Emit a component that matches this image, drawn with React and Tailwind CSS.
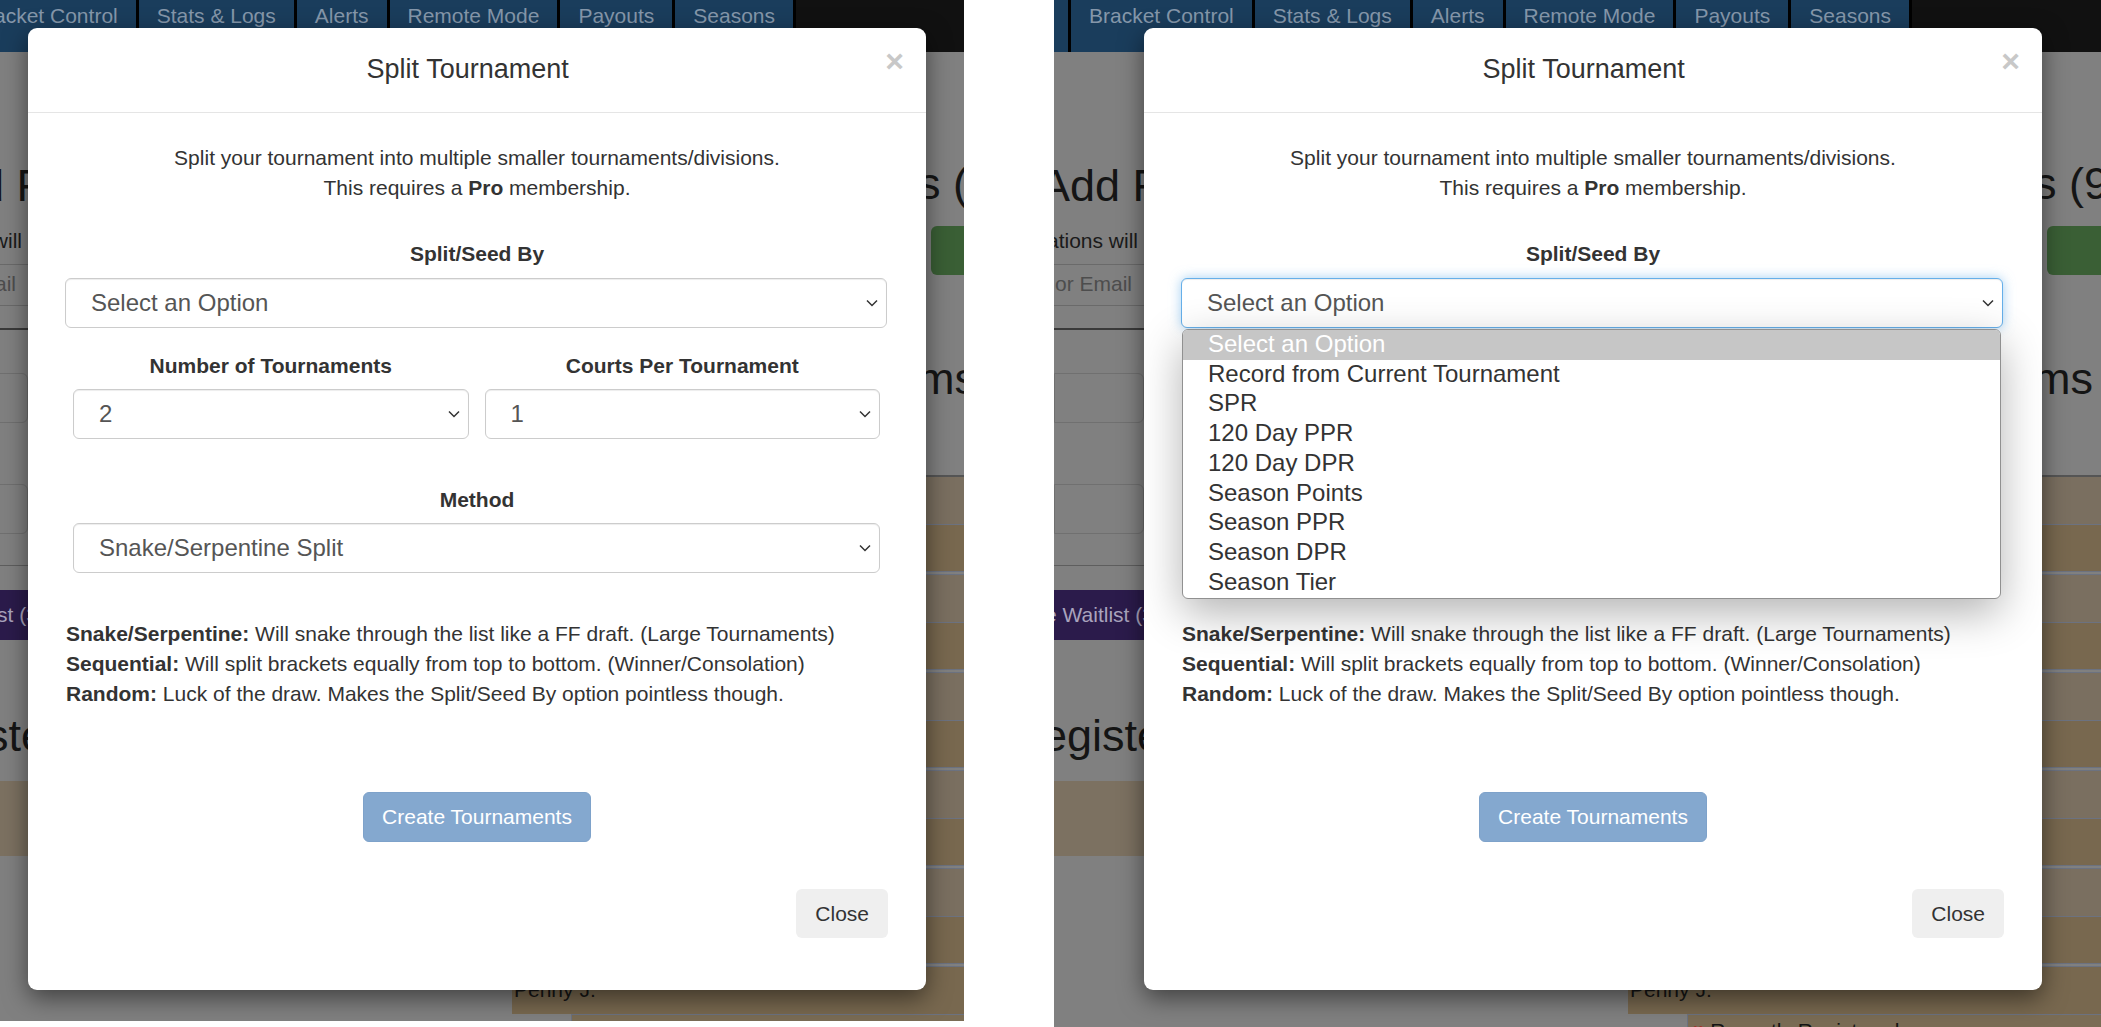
import React from "react";

const TABS = ["Bracket Control", "Stats & Logs", "Alerts", "Remote Mode", "Payouts", "Seasons"];
const OPTIONS = [
  "Select an Option",
  "Record from Current Tournament",
  "SPR",
  "120 Day PPR",
  "120 Day DPR",
  "Season Points",
  "Season PPR",
  "Season DPR",
  "Season Tier",
];

function Chevron() {
  return (
    <svg width="12" height="8" viewBox="0 0 12 8" className="shrink-0">
      <path d="M1 1.5 L6 6.5 L11 1.5" fill="none" stroke="#333" strokeWidth="1.5" />
    </svg>
  );
}

function FakeSelect({ value, focused }) {
  return (
    <div
      className={
        focused
          ? "h-[50px] flex items-center justify-between pl-[25px] pr-[8px] rounded-[6px] border border-[#66afe9] bg-white text-[24px] text-[#555] shadow-[inset_0_1px_1px_rgba(0,0,0,0.075),0_0_12px_rgba(102,175,233,0.6)]"
          : "h-[50px] flex items-center justify-between pl-[25px] pr-[8px] rounded-[6px] border border-[#cccccc] bg-white text-[24px] text-[#555] shadow-[inset_0_1px_1px_rgba(0,0,0,0.075)]"
      }
    >
      <span className="whitespace-nowrap">{value}</span>
      <Chevron />
    </div>
  );
}

function Dropdown() {
  return (
    <div className="absolute z-10 top-[51px] left-[1px] right-[2px] bg-white border border-[#909090] rounded-[6px] overflow-hidden shadow-[0_14px_44px_rgba(0,0,0,0.3)]">
      {OPTIONS.map((o, i) => (
        <div
          key={o}
          className={
            i === 0
              ? "h-[29.75px] pl-[25px] pb-[2px] flex items-center text-[24px] bg-[#c6c6c6] text-white whitespace-nowrap"
              : "h-[29.75px] pl-[25px] pb-[2px] flex items-center text-[24px] text-[#333] whitespace-nowrap"
          }
        >
          {o}
        </div>
      ))}
    </div>
  );
}

function Modal({ open }) {
  return (
    <div className="absolute left-[90px] top-[28px] w-[898px] h-[962px] bg-white rounded-[9px] shadow-[0_8px_24px_rgba(0,0,0,0.5)] text-[#333]">
      <div className="h-[85px] border-b border-[#e5e5e5] flex pt-[22px] px-[22px]">
        <div className="flex-1 text-center text-[27px] leading-[38px] whitespace-nowrap">Split Tournament</div>
        <span className="-mt-[5px] text-[32px] leading-[32px] font-bold text-[#c8c8c8]">×</span>
      </div>

      <div className="pt-[30px] text-center text-[21px] leading-[30px]">
        Split your tournament into multiple smaller tournaments/divisions.
        <br />
        This requires a <b>Pro</b> membership.
      </div>

      <div className="mt-[36px] text-center font-bold text-[21px] leading-[30px]">Split/Seed By</div>
      <div className="relative z-10 mt-[9px] ml-[37px] mr-[39px]">
        <FakeSelect value="Select an Option" focused={open} />
        {open && <Dropdown />}
      </div>

      <div className="mt-[23px] ml-[45px] mr-[46px] grid grid-cols-2 gap-x-[16px]">
        <div className="text-center font-bold text-[21px] leading-[30px]">Number of Tournaments</div>
        <div className="text-center font-bold text-[21px] leading-[30px]">Courts Per Tournament</div>
        <div className="mt-[8px]">
          <FakeSelect value="2" />
        </div>
        <div className="mt-[8px]">
          <FakeSelect value="1" />
        </div>
      </div>

      <div className="mt-[46px] text-center font-bold text-[21px] leading-[30px]">Method</div>
      <div className="mt-[8px] ml-[45px] mr-[46px]">
        <FakeSelect value="Snake/Serpentine Split" />
      </div>

      <div className="mt-[46px] ml-[38px] text-[21px] leading-[30px] whitespace-nowrap">
        <div>
          <b>Snake/Serpentine:</b> Will snake through the list like a FF draft. (Large Tournaments)
        </div>
        <div>
          <b>Sequential:</b> Will split brackets equally from top to bottom. (Winner/Consolation)
        </div>
        <div>
          <b>Random:</b> Luck of the draw. Makes the Split/Seed By option pointless though.
        </div>
      </div>

      <div className="mt-[83px] flex justify-center">
        <div className="w-[228px] h-[50px] rounded-[6px] bg-[#84a8cf] border border-[#7ea2ca] text-white text-[21px] flex items-center justify-center whitespace-nowrap">
          Create Tournaments
        </div>
      </div>

      <div className="mt-[47px] flex justify-end mr-[38px]">
        <div className="h-[49px] px-[19px] rounded-[6px] bg-[#efefef] text-[21px] flex items-center">Close</div>
      </div>
    </div>
  );
}

function TanBlock() {
  return (
    <div className="border-b border-[#6c7280]">
      <div className="h-[48px] bg-[#7a6f60] border-b border-[#6c7280]" />
      <div className="h-[47px] bg-[#78684f] border-b border-[#6c7280] mb-[2px]" />
    </div>
  );
}

function Screen({ open }) {
  return (
    <div className="relative w-[1047px] h-[1027px] bg-[#808080] overflow-hidden">
      <div className="h-[52px] bg-[#111] flex">
        <div className="w-[17px] h-full bg-[#1a3d5c] border-r-[3px] border-black" />
        {TABS.map((t) => (
          <div
            key={t}
            className="h-full bg-[#1a3d5c] border-r-[3px] border-black px-[18px] pt-[1px] text-[21px] leading-[30px] text-[#8597aa] whitespace-nowrap"
          >
            {t}
          </div>
        ))}
      </div>

      <div className="flex">
        <div className="w-[574px] shrink-0">
          <div className="mt-[109px] -ml-[14px] text-[45px] leading-[50px] text-[#151515] whitespace-nowrap">Add Free Agents</div>
          <div className="mt-[15px] -ml-[7px] text-[21px] leading-[30px] text-[#1a1a1a] whitespace-nowrap">ations will receive an email</div>
          <div className="mt-[8px] h-[42px] border-y border-[#6a6a6a] pt-[4px] pl-[1px] text-[21px] leading-[30px] text-[#4d4d4d]">or Email</div>
          <div className="mt-[22px] h-[2px] bg-[#3a3a3a]" />
          <div className="mt-[43px] w-[90px] h-[50px] rounded-r-[6px] border border-[#707070]" />
          <div className="mt-[61px] w-[90px] h-[50px] rounded-r-[6px] border border-[#707070]" />
          <div className="mt-[31px] h-[1px] bg-[#5e5e5e]" />
          <div className="mt-[24px] w-[300px] h-[50px] bg-[#2b1b4b] flex items-center text-[21px] text-[#a9a3bd] whitespace-nowrap">
            <span className="-ml-[9px]">e Waitlist (3)</span>
          </div>
          <div className="mt-[71px] -ml-[12px] text-[45px] leading-[50px] text-[#151515] whitespace-nowrap">egistered</div>
          <div className="mt-[20px] h-[75px] bg-[#7c7161]" />
        </div>

        <div className="flex-1 min-w-0">
          <div className="mt-[107px] pl-[296px] text-[45px] leading-[50px] text-[#151515] whitespace-nowrap">Teams (9)</div>
          <div className="mt-[17px] ml-[419px] h-[49px] bg-[#3a5f35] rounded-l-[6px]" />
          <div className="mt-[79px] pr-[8px] text-right text-[45px] leading-[50px] text-[#151515] whitespace-nowrap">Teams</div>
          <div className="mt-[71px] border-t-2 border-[#555]">
            <TanBlock />
            <TanBlock />
            <TanBlock />
            <TanBlock />
            <TanBlock />
            <div className="h-[47px] bg-[#78684f] pt-[8px] pl-[2px] text-[21px] leading-[30px] text-[#151515]">Penny J.</div>
            <div className="ml-[59px] h-[60px] bg-[#7a6c55] border-t border-l border-[#6c7280] pt-[4px] pl-[4px] text-[21px] leading-[24px] text-[#151515] whitespace-nowrap">
              <span className="text-[#b02020]">♥</span> Recently Registered
            </div>
          </div>
        </div>
      </div>

      <Modal open={open} />
    </div>
  );
}

export default function App() {
  return (
    <div className="w-[2101px] h-[1027px] bg-white flex overflow-hidden font-['Liberation_Sans',Arial,sans-serif]">
      <div className="w-[964px] h-[1021px] overflow-hidden shrink-0">
        <div className="-ml-[62px]">
          <Screen open={false} />
        </div>
      </div>
      <div className="w-[90px] shrink-0" />
      <div className="w-[1047px] h-[1027px] overflow-hidden shrink-0">
        <Screen open />
      </div>
    </div>
  );
}
